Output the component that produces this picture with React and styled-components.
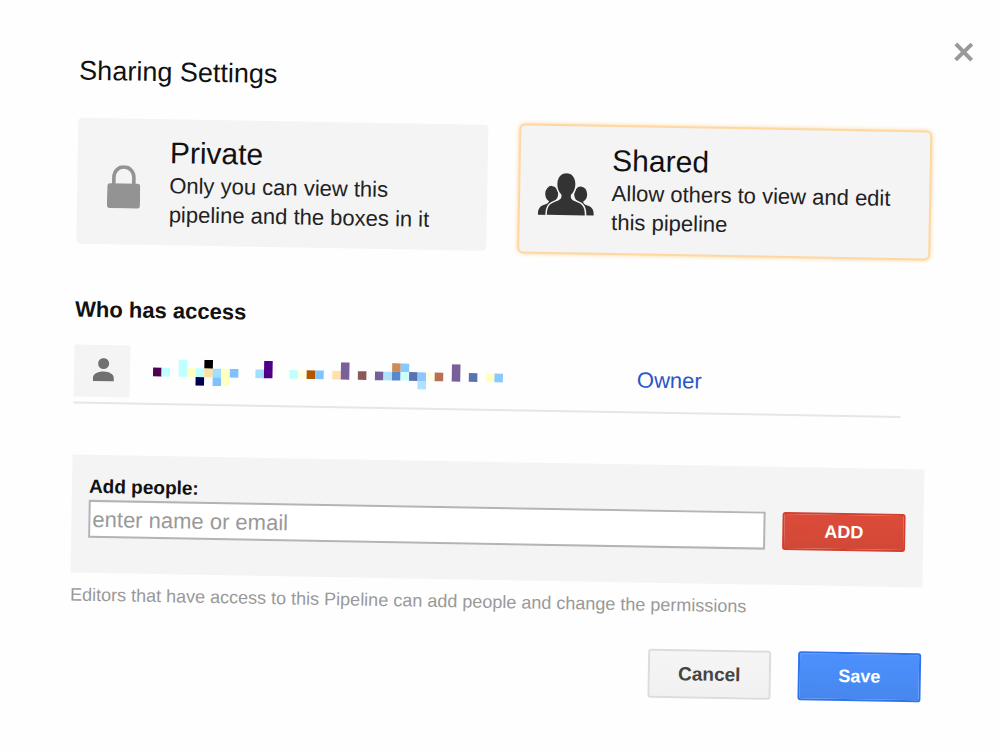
import React, { useState } from "react";
import styled, { createGlobalStyle } from "styled-components";

const GlobalStyle = createGlobalStyle`
  * {
    box-sizing: border-box;
  }

  body {
    margin: 0;
    overflow: hidden;
    background: #fefefe;
    font-family: "Liberation Sans", Arial, sans-serif;
    color: #111;
  }

  button,
  input {
    font-family: inherit;
  }
`;

// the whole dialog hangs slightly tilted
const Dialog = styled.main`
  padding-bottom: 57px;
  transform: rotate(1deg);
`;

const TopBar = styled.div`
  display: flex;
  justify-content: flex-end;
  padding: 34px 32px 0;
`;

const CloseButton = styled.button`
  display: flex;
  padding: 0;
  border: 0;
  background: none;
  cursor: pointer;
`;

const Content = styled.div`
  padding: 8px 74px 0;
`;

const Title = styled.h1`
  margin: 0 0 31px;
  font-size: 27px;
  font-weight: 400;
  line-height: 32px;
`;

const Options = styled.div`
  display: grid;
  grid-template-columns: 1fr 1fr;
  gap: 33px;
`;

const OptionCard = styled.button`
  display: flex;
  align-items: center;
  padding: 16px 20px 16px 0;
  border: 0;
  border-radius: 4px;
  background: #f4f4f4;
  color: #222;
  text-align: left;
  cursor: pointer;
  box-shadow: ${({ $selected }) =>
    $selected ? "0 0 0 2px #fdd8a3, 0 0 4px 2px #fdd49a" : "none"};
`;

const OptionIcon = styled.span`
  display: flex;
  flex: 0 0 92px;
  justify-content: center;
  padding-top: 10px;
`;

const OptionName = styled.span`
  display: block;
  font-size: 30px;
  line-height: 36px;
  color: #111;
`;

const OptionText = styled.span`
  display: block;
  font-size: 22px;
  line-height: 29px;
`;

const SectionTitle = styled.h2`
  margin: 52px 0 21px;
  font-size: 22px;
  font-weight: 700;
  line-height: 28px;
`;

const Member = styled.div`
  display: flex;
  align-items: center;
  margin-right: 25px;
  padding-bottom: 5px;
  border-bottom: 2px solid #e6e6e6;
`;

const Avatar = styled.div`
  display: flex;
  align-items: center;
  justify-content: center;
  width: 56px;
  height: 52px;
  padding: 0 0 2px 2px;
  background: #f4f4f4;
`;

const MemberName = styled.div`
  display: flex;
  flex: 1;
  padding-left: 23px;
`;

const Role = styled.a`
  flex: 0 0 264px;
  font-size: 22px;
  line-height: 28px;
  color: #2a56c6;
  text-decoration: none;
`;

const AddPanel = styled.form`
  margin-top: 51px;
  padding: 20px 18px 35px 17px;
  background: #f4f4f4;
`;

const Label = styled.label`
  display: block;
  margin-bottom: 1px;
  font-size: 19px;
  font-weight: 700;
  line-height: 24px;
`;

const AddRow = styled.div`
  display: flex;
  gap: 17px;
`;

const Input = styled.input`
  flex: 1;
  min-width: 0;
  height: 38px;
  padding: 2px 2px 0;
  border: 2px solid #b3b3b8;
  background: #fff;
  font-size: 22px;

  &::placeholder {
    color: #999;
    opacity: 1;
  }
`;

const Note = styled.p`
  margin: 10px 0 32px;
  font-size: 18px;
  line-height: 24px;
  color: #999;
`;

const Footer = styled.div`
  display: flex;
  justify-content: flex-end;
  gap: 27px;
`;

const variants = {
  add: "border-color: #d23f2e; background: linear-gradient(#dd4b39, #d14836); color: #fff;",
  plain:
    "border-color: #dcdcdc; background: linear-gradient(#f5f5f5, #f1f1f1); color: #444;",
  primary:
    "border-color: #2f74ee; background: linear-gradient(#4d90fe, #4787ed); color: #fff;",
};

const Button = styled.button`
  width: 123px;
  height: ${({ $variant }) => ($variant === "add" ? "38px" : "49px")};
  padding: 0;
  border: 2px solid;
  border-radius: 3px;
  font-size: ${({ $variant }) => ($variant === "plain" ? "19px" : "18px")};
  font-weight: 700;
  cursor: pointer;
  ${({ $variant }) => variants[$variant]}
`;

const LockIcon = () => (
  <svg width="33" height="43" viewBox="0 0 33 43" aria-hidden="true">
    <path
      d="M6.5 21V12a10 10.5 0 0 1 20 0v9"
      fill="none"
      stroke="#939393"
      strokeWidth="3.6"
    />
    <rect y="18" width="33" height="25" rx="3" fill="#939393" />
  </svg>
);

const GroupIcon = () => (
  <svg width="56" height="43" viewBox="0 0 56 43" aria-hidden="true">
    <g fill="#333">
      <ellipse cx="13.5" cy="21" rx="6.5" ry="8" />
      <ellipse cx="42.5" cy="21" rx="6.5" ry="8" />
      <path d="M0 42c0-5 1.500-8 5-9.500 3-1.200 5.500-1.500 6-4.500h5v14z" />
      <path d="M56 42c0-5-1.500-8-5-9.500-3-1.200-5.500-1.500-6-4.500h-5v14z" />
    </g>
    <path
      d="M28 0c-5.500 0-9 4.500-9 11 0 4.500 1.600 8 4.200 10.500.6 3.500-.7 5-4.200 6.500-6 2.500-10 3.500-10 14h38c0-10.500-4-11.500-10-14-3.500-1.500-4.800-3-4.200-6.500C35.400 19 37 15.500 37 11c0-6.500-3.500-11-9-11z"
      fill="#333"
      stroke="#f4f4f4"
      strokeWidth="3"
      paintOrder="stroke"
    />
  </svg>
);

const PersonIcon = () => (
  <svg width="21" height="25" viewBox="0 0 21 25" aria-hidden="true">
    <circle cx="10.5" cy="5.500" r="5.500" fill="#707070" />
    <path d="M0 23v-3c0-4 5-6.500 10.500-6.500S21 16 21 20v3z" fill="#707070" />
  </svg>
);

const CloseIcon = () => (
  <svg width="20" height="20" viewBox="0 0 20 20" aria-hidden="true">
    <path d="M2 2l16 16M18 2L2 18" stroke="#999" strokeWidth="4" />
  </svg>
);

// [column, row, rows, colour]
const blocks = [
  [0, 1, 1, "#500050"],
  [1, 1, 1, "#c0ffff"],
  [3, 0, 2, "#c0ffff"],
  [4, 1, 1, "#ffffc0"],
  [5, 1, 1, "#c0ffff"],
  [5, 2, 1, "#000050"],
  [6, 0, 1, "#000"],
  [6, 1, 1, "#ffdfa0"],
  [7, 1, 1, "#a0dfff"],
  [7, 2, 1, "#80c0ff"],
  [8, 1, 2, "#ffffc0"],
  [9, 1, 1, "#80c0ff"],
  [12, 1, 1, "#a0dfff"],
  [13, 0, 2, "#500088"],
  [16, 1, 1, "#c0ffff"],
  [17, 1, 1, "#ffffe6"],
  [18, 1, 1, "#b05800"],
  [19, 1, 1, "#80c5ff"],
  [21, 1, 1, "#ffe0ad"],
  [22, 0, 2, "#7a609a"],
  [24, 1, 1, "#8d5858"],
  [26, 1, 1, "#76609a"],
  [27, 1, 1, "#b0e2ff"],
  [28, 0, 1, "#cd8b55"],
  [28, 1, 1, "#5889cd"],
  [29, 0, 1, "#8bc8ff"],
  [29, 1, 1, "#cdffff"],
  [30, 1, 1, "#5873b0"],
  [31, 1, 1, "#8bc8ff"],
  [31, 2, 1, "#b0e2ff"],
  [32, 1, 1, "#ffffe6"],
  [33, 1, 1, "#b57055"],
  [35, 0, 2, "#7a609a"],
  [37, 1, 1, "#5873b0"],
  [39, 1, 1, "#ffffc0"],
  [40, 1, 1, "#8bc8ff"],
];

const HiddenName = () => (
  <svg
    width="350"
    height="26"
    viewBox="0 0 41 3"
    preserveAspectRatio="none"
    role="img"
    aria-label="Hidden member name"
  >
    {blocks.map(([x, y, h, fill]) => (
      <rect key={`${x}-${y}`} x={x} y={y} width="1" height={h} fill={fill} />
    ))}
  </svg>
);

const options = [
  {
    id: "private",
    name: "Private",
    text: "Only you can view this pipeline and the boxes in it",
    Icon: LockIcon,
  },
  {
    id: "shared",
    name: "Shared",
    text: "Allow others to view and edit this pipeline",
    Icon: GroupIcon,
  },
];

function App() {
  const [mode, setMode] = useState("shared");
  const [person, setPerson] = useState("");

  const handleAdd = (e) => {
    e.preventDefault();
    setPerson("");
  };

  return (
    <>
      <GlobalStyle />
      <Dialog>
        <TopBar>
          <CloseButton type="button" aria-label="Close">
            <CloseIcon />
          </CloseButton>
        </TopBar>
        <Content>
          <Title>Sharing Settings</Title>
          <Options>
            {options.map(({ id, name, text, Icon }) => (
              <OptionCard
                key={id}
                type="button"
                aria-pressed={mode === id}
                $selected={mode === id}
                onClick={() => setMode(id)}
              >
                <OptionIcon>
                  <Icon />
                </OptionIcon>
                <span>
                  <OptionName>{name}</OptionName>
                  <OptionText>{text}</OptionText>
                </span>
              </OptionCard>
            ))}
          </Options>

          <SectionTitle>Who has access</SectionTitle>
          <Member>
            <Avatar>
              <PersonIcon />
            </Avatar>
            <MemberName>
              <HiddenName />
            </MemberName>
            <Role href="#owner">Owner</Role>
          </Member>

          <AddPanel onSubmit={handleAdd}>
            <Label htmlFor="person">Add people:</Label>
            <AddRow>
              <Input
                type="text"
                id="person"
                value={person}
                onChange={(e) => setPerson(e.target.value)}
                placeholder="enter name or email"
              />
              <Button type="submit" $variant="add">
                ADD
              </Button>
            </AddRow>
          </AddPanel>
          <Note>
            Editors that have access to this Pipeline can add people and change
            the permissions
          </Note>

          <Footer>
            <Button type="button" $variant="plain">
              Cancel
            </Button>
            <Button type="button" $variant="primary">
              Save
            </Button>
          </Footer>
        </Content>
      </Dialog>
    </>
  );
}

export default App;
